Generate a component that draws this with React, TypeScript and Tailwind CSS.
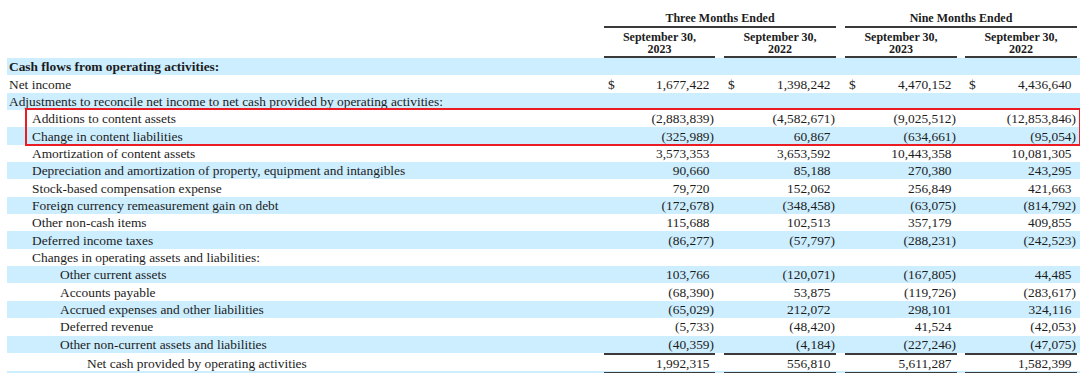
type Row = {
  label: string;
  indent: 0 | 1 | 2 | 3;
  vals?: [string, string, string, string];
  dollar?: boolean;
  bold?: boolean;
  total?: boolean;
};

const rows: Row[] = [
  { label: "Cash flows from operating activities:", indent: 0, bold: true },
  { label: "Net income", indent: 0, vals: ["1,677,422", "1,398,242", "4,470,152", "4,436,640"], dollar: true },
  { label: "Adjustments to reconcile net income to net cash provided by operating activities:", indent: 0 },
  { label: "Additions to content assets", indent: 1, vals: ["(2,883,839)", "(4,582,671)", "(9,025,512)", "(12,853,846)"] },
  { label: "Change in content liabilities", indent: 1, vals: ["(325,989)", "60,867", "(634,661)", "(95,054)"] },
  { label: "Amortization of content assets", indent: 1, vals: ["3,573,353", "3,653,592", "10,443,358", "10,081,305"] },
  { label: "Depreciation and amortization of property, equipment and intangibles", indent: 1, vals: ["90,660", "85,188", "270,380", "243,295"] },
  { label: "Stock-based compensation expense", indent: 1, vals: ["79,720", "152,062", "256,849", "421,663"] },
  { label: "Foreign currency remeasurement gain on debt", indent: 1, vals: ["(172,678)", "(348,458)", "(63,075)", "(814,792)"] },
  { label: "Other non-cash items", indent: 1, vals: ["115,688", "102,513", "357,179", "409,855"] },
  { label: "Deferred income taxes", indent: 1, vals: ["(86,277)", "(57,797)", "(288,231)", "(242,523)"] },
  { label: "Changes in operating assets and liabilities:", indent: 1 },
  { label: "Other current assets", indent: 2, vals: ["103,766", "(120,071)", "(167,805)", "44,485"] },
  { label: "Accounts payable", indent: 2, vals: ["(68,390)", "53,875", "(119,726)", "(283,617)"] },
  { label: "Accrued expenses and other liabilities", indent: 2, vals: ["(65,029)", "212,072", "298,101", "324,116"] },
  { label: "Deferred revenue", indent: 2, vals: ["(5,733)", "(48,420)", "41,524", "(42,053)"] },
  { label: "Other non-current assets and liabilities", indent: 2, vals: ["(40,359)", "(4,184)", "(227,246)", "(47,075)"] },
  { label: "Net cash provided by operating activities", indent: 3, vals: ["1,992,315", "556,810", "5,611,287", "1,582,399"], total: true },
];

const GRID = "grid grid-cols-[597px_111px_9px_112px_9px_112px_8px_112px]";
const INDENT = ["pl-[2px]", "pl-[25px]", "pl-[53px]", "pl-[80px]"];

function Amount({ v, dollar, total }: { v?: string; dollar?: boolean; total?: boolean }) {
  const neg = !!v && v.endsWith(")");
  const text = v ? (neg ? v.slice(0, -1) : v) : "";
  return (
    <div
      className={
        "flex items-center justify-between pr-[1px] pl-[4px] h-full " +
        (total ? "border-t-2 border-b-2 border-[#3a3a3a]" : "")
      }
    >
      <span>{dollar ? "$" : ""}</span>
      <span className="flex">
        <span>{text}</span>
        <span className={neg ? "" : "invisible"}>)</span>
      </span>
    </div>
  );
}

function DataRow({ row, blue }: { row: Row; blue: boolean }) {
  const v = row.vals;
  return (
    <div
      className={
        GRID +
        " " +
        (row.total ? "h-[18px]" : "h-[17.35px]") +
        " " +
        (blue ? "bg-[#cceeff]" : "bg-white")
      }
    >
      <div className={"flex items-center whitespace-nowrap " + INDENT[row.indent] + (row.bold ? " font-bold" : "")}>
        {row.label}
      </div>
      <Amount v={v?.[0]} dollar={row.dollar} total={row.total} />
      <div />
      <Amount v={v?.[1]} dollar={row.dollar} total={row.total} />
      <div />
      <Amount v={v?.[2]} dollar={row.dollar} total={row.total} />
      <div />
      <Amount v={v?.[3]} dollar={row.dollar} total={row.total} />
    </div>
  );
}

function SubHead({ year }: { year: string }) {
  return (
    <div className="pt-[3px] pb-[1px] border-b-2 border-[#3a3a3a] text-center font-bold text-[12px] leading-[12px]">
      <div>September 30,</div>
      <div>{year}</div>
    </div>
  );
}

export default function App() {
  return (
    <div className="w-[1080px] h-[373px] overflow-hidden bg-white pl-[7px] text-[#1c1c1c] text-[13.4px] leading-[17px] font-['Liberation_Serif',serif]">
      {/* Column headers */}
      <div className={GRID}>
        <div />
        <div className="col-span-3 h-[28px] pt-[12px] border-b-2 border-[#3a3a3a] text-center font-bold text-[12px] leading-[13px]">
          Three Months Ended
        </div>
        <div />
        <div className="col-span-3 h-[28px] pt-[12px] border-b-2 border-[#3a3a3a] text-center font-bold text-[12px] leading-[13px]">
          Nine Months Ended
        </div>
      </div>
      <div className={GRID}>
        <div />
        <SubHead year="2023" />
        <div />
        <SubHead year="2022" />
        <div />
        <SubHead year="2023" />
        <div />
        <SubHead year="2022" />
      </div>

      {rows.slice(0, 3).map((r, i) => (
        <DataRow key={r.label} row={r} blue={i % 2 === 0} />
      ))}

      {/* Highlighted rows */}
      <div className="relative">
        {rows.slice(3, 5).map((r, i) => (
          <DataRow key={r.label} row={r} blue={(i + 3) % 2 === 0} />
        ))}
        <div className="absolute -top-[2px] left-[18px] -right-[1px] -bottom-[1px] border-2 border-[#ec1c24] pointer-events-none" />
      </div>

      {rows.slice(5).map((r, i) => (
        <DataRow key={r.label} row={r} blue={(i + 5) % 2 === 0} />
      ))}
      <div className="h-[17px] bg-[#cceeff]" />
    </div>
  );
}
